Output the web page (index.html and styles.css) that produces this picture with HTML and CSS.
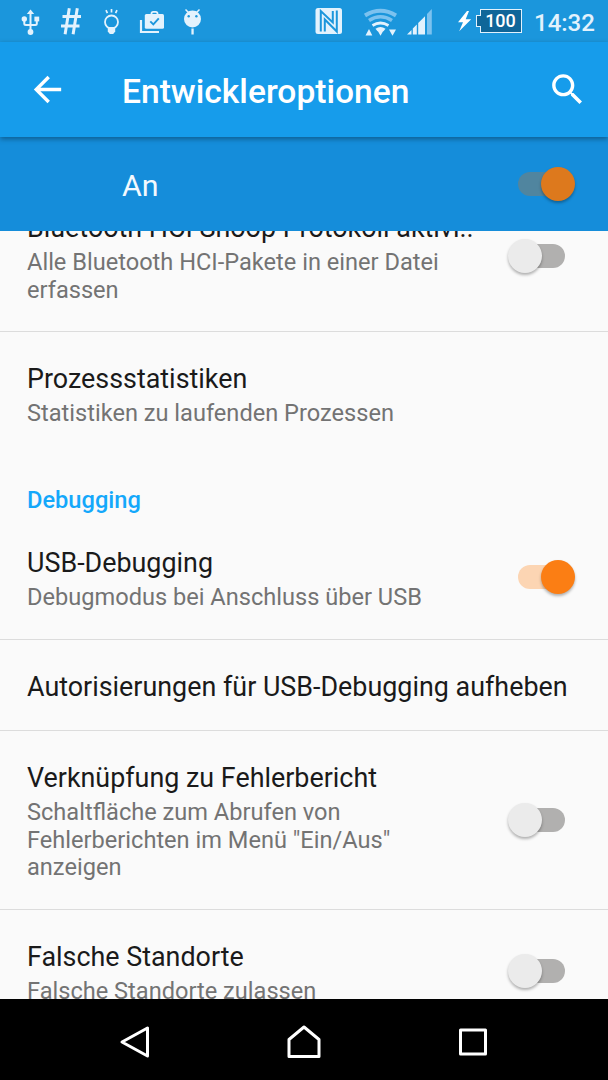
FILE: index.html
```html
<!DOCTYPE html>
<html lang="de">
<head>
    <meta charset="UTF-8">
    <meta name="viewport" content="width=device-width, initial-scale=1.0">
    <title>Entwickleroptionen</title>
    <link rel="stylesheet" href="styles.css">
</head>
<body>
    <div class="screen">
        <div class="statusbar">
            <svg class="notifications" width="220" height="42" viewBox="0 0 220 42" fill="#e3f2fd">
                <!-- USB -->
                <path d="M30.500 31V12M24.300 19v4.500q0 1.500 1.500 1.500h9.500q1.500 0 1.500-1.500V19" stroke="#e3f2fd" stroke-width="2" fill="none"/>
                <path d="M30.500 9.500l3.700 4.500h-7.400z"/>
                <circle cx="30.500" cy="32" r="2.900"/>
                <circle cx="24.300" cy="19" r="2.700"/>
                <rect x="34.400" y="16.600" width="4.800" height="4.800"/>
                <!-- Raute -->
                <path d="M69.300 8.200L65.100 34.200M77.300 8.200L73.100 34.200M62.500 16.500h18.500M61 26h18.500" stroke="#e3f2fd" stroke-width="3" fill="none"/>
                <!-- Lampe -->
                <circle cx="111.500" cy="22" r="6.500" stroke="#e3f2fd" stroke-width="1.800" fill="none"/>
                <path d="M107.800 27h7.400v4.500l-2 2.500h-3.400l-2-2.500z"/>
                <path d="M106 10.200l1.400 3M111.500 9v3.500M117 10.200l-1.400 3" stroke="#e3f2fd" stroke-width="1.700"/>
                <!-- Updates -->
                <path d="M141 20v12h18" stroke="#e3f2fd" stroke-width="2.200" fill="none"/>
                <path d="M151.500 15v-1.500q0-1.700 1.700-1.700h2.600q1.700 0 1.700 1.700V15" stroke="#e3f2fd" stroke-width="1.800" fill="none"/>
                <rect x="144.800" y="14" width="19.200" height="14.800" rx="1.500"/>
                <path d="M150.300 21.300l3 3 5.500-6" stroke="#1b96dc" stroke-width="1.900" fill="none"/>
                <!-- Android -->
                <circle cx="192.500" cy="19" r="8.500"/>
                <path d="M188.500 12.500l-3-3M196.500 12.500l3-3" stroke="#e3f2fd" stroke-width="1.500"/>
                <rect x="191.400" y="28.500" width="2.300" height="6"/>
                <circle cx="188.700" cy="16.300" r="1.200" fill="#1b96dc"/>
                <circle cx="196.400" cy="16.300" r="1.200" fill="#1b96dc"/>
            </svg>
            <svg class="signals" width="180" height="42" viewBox="300 0 180 42" fill="#e3f2fd">
                <!-- NFC -->
                <rect x="315.500" y="8" width="26.500" height="26" rx="2.500"/>
                <path d="M320.800 31.500V11L332.800 22.500V11M336.800 10.500V31.500L324.800 19.500V31.500" stroke="#1b96dc" stroke-width="2" fill="none"/>
                <!-- WLAN -->
                <g fill="none">
                    <path d="M365 15.500Q380.500 6 396 15.500" stroke="#7cc2ef" stroke-width="4"/>
                    <path d="M369 20.500Q380.500 13 392 20.500" stroke="#7cc2ef" stroke-width="3.500"/>
                    <path d="M372.500 25.500Q380.500 20.500 388.500 25.500" stroke="#e3f2fd" stroke-width="2.800"/>
                </g>
                <path d="M375.500 28.800q5-3.800 10 0l-2 2.500h-6z"/>
                <path d="M365.500 35.500l3.500-6.500 3.300 6.500zM377 29.500h7l-3.500 6.300zM389 29.500h7l-3.500 6.300z"/>
                <!-- Mobilfunk -->
                <path d="M407 34.500l4.500-4.500v4.500zM412.800 34.500v-6l4-4v10zM418.200 34.500V23l2.800-2.800v14.300zM421 34.500V20.200l4-4v18.300z"/>
                <path d="M427 34.500V14l4.800-5v25.500z" fill="#7cc2ef"/>
                <path d="M467 11L458 22.300h5l-3.800 8.900 12-12h-5.500l3.300-8.200z" fill="#fff"/>
            </svg>
            <div class="battery">100</div>
            <div class="clock">14:32</div>
        </div>

        <div class="toolbar">
            <svg class="back" width="41" height="41" viewBox="0 0 24 24" fill="#fff"><path d="M20 11H7.830l5.590-5.590L12 4l-8 8 8 8 1.410-1.410L7.830 13H20v-2z"/></svg>
            <h1>Entwickleroptionen</h1>
            <svg class="search" width="41" height="41" viewBox="0 0 24 24" fill="#fff"><path d="M15.500 14h-.79l-.28-.27C15.410 12.590 16 11.110 16 9.500 16 5.910 13.090 3 9.500 3S3 5.910 3 9.500 5.910 16 9.500 16c1.610 0 3.090-.59 4.230-1.570l.27.280v.79l5 4.990L20.490 19l-4.990-5zm-6 0C7.010 14 5 11.990 5 9.500S7.010 5 9.500 5 14 7.010 14 9.500 11.990 14 9.500 14z"/></svg>
        </div>

        <div class="master">
            <span>An</span>
            <div class="switch on"></div>
        </div>

        <div class="list">
            <div class="item scrolled">
                <div class="text">
                    <h2>Bluetooth HCI Snoop Protokoll aktivi..</h2>
                    <p>Alle Bluetooth HCI-Pakete in einer Datei erfassen</p>
                </div>
                <div class="switch"></div>
            </div>
            <div class="item last">
                <div class="text">
                    <h2>Prozessstatistiken</h2>
                    <p>Statistiken zu laufenden Prozessen</p>
                </div>
            </div>
            <div class="category">Debugging</div>
            <div class="item first">
                <div class="text">
                    <h2>USB-Debugging</h2>
                    <p>Debugmodus bei Anschluss über USB</p>
                </div>
                <div class="switch on"></div>
            </div>
            <div class="item">
                <div class="text wide">
                    <h2>Autorisierungen für USB-Debugging aufheben</h2>
                </div>
            </div>
            <div class="item">
                <div class="text">
                    <h2>Verknüpfung zu Fehlerbericht</h2>
                    <p>Schaltfläche zum Abrufen von Fehlerberichten im Menü "Ein/Aus" anzeigen</p>
                </div>
                <div class="switch"></div>
            </div>
            <div class="item">
                <div class="text">
                    <h2>Falsche Standorte</h2>
                    <p>Falsche Standorte zulassen</p>
                </div>
                <div class="switch"></div>
            </div>
        </div>

        <div class="navbar">
            <svg width="34" height="34" viewBox="0 0 34 34"><path d="M4 17L29.500 3v28z"/></svg>
            <svg width="34" height="34" viewBox="0 0 34 34"><path d="M2 14.500L17 2l15 12.500V31.500H2z"/></svg>
            <svg width="34" height="34" viewBox="0 0 34 34"><path d="M4.500 5h25v24h-25z"/></svg>
        </div>
    </div>
</body>
</html>
```

FILE: styles.css
```css
body {
    margin: 0;
    font-family: Roboto, sans-serif;
    background-color: #fafafa;
}
.screen {
    display: flex;
    flex-direction: column;
    width: 608px;
    height: 1080px;
    overflow: hidden;
}
h1, h2, p {
    margin: 0;
    font-weight: normal;
}
.statusbar {
    display: flex;
    align-items: center;
    flex: none;
    height: 42px;
    background-color: #1b96dc;
    color: #e3f2fd;
}
.signals {
    margin-left: 80px;
}
.battery {
    position: relative;
    box-sizing: border-box;
    width: 42px;
    height: 24px;
    border: 1px solid #e3f2fd;
    background-color: #0f6699;
    color: #fff;
    font-size: 18px;
    font-weight: 500;
    line-height: 22px;
    text-align: center;
    text-indent: -1px;
}
.battery::before {
    content: "";
    position: absolute;
    left: -5px;
    top: 5px;
    width: 4px;
    height: 10px;
    border: 1px solid #e3f2fd;
    border-right: none;
    background-color: #0f6699;
}
.clock {
    margin: 3px 0 0 12px;
    font-size: 24px;
    font-weight: 500;
}
.toolbar {
    position: relative;
    z-index: 2;
    display: flex;
    align-items: center;
    flex: none;
    box-sizing: border-box;
    height: 95px;
    padding: 0 20px 0 27px;
    background-color: #169ceb;
    box-shadow: 0 2px 5px rgba(0,0,0,0.35);
    color: #fff;
}
.toolbar h1 {
    flex: 1;
    margin: 3px 0 0 54px;
    font-size: 33.600px;
    font-weight: 500;
}
.master {
    display: flex;
    align-items: center;
    justify-content: space-between;
    flex: none;
    box-sizing: border-box;
    height: 94px;
    padding: 0 43px 0 122px;
    background-color: #158dda;
    color: #f3f9fe;
    font-size: 30.400px;
}
.master span {
    margin-top: 2px;
}
.list {
    flex: 1;
    overflow: hidden;
    background-color: #fafafa;
}
.item {
    display: flex;
    align-items: center;
    justify-content: space-between;
    padding: 31px 43px 27px 27px;
    border-bottom: 1px solid #dcdcdc;
}
.item.scrolled {
    margin-top: -50px;
}
.item.last {
    border-bottom: none;
}
.item.first {
    padding-top: 33px;
}
.text {
    width: 447px;
}
.text.wide {
    width: auto;
}
.item h2 {
    overflow: hidden;
    color: #1a1a1a;
    font-size: 26.880px;
    line-height: 32px;
    white-space: nowrap;
    text-overflow: ellipsis;
}
.item p {
    margin-top: 5px;
    color: #737373;
    font-size: 23.600px;
    line-height: 27.700px;
}
.category {
    padding: 31px 27px 0;
    color: #14a8fb;
    font-size: 23.640px;
    font-weight: 500;
    line-height: 28px;
}
.switch {
    position: relative;
    width: 47px;
    height: 24px;
    border-radius: 12px;
    background-color: #b1b0af;
}
.item .switch {
    margin-bottom: 4px;
}
.switch::after {
    content: "";
    position: absolute;
    left: -10px;
    top: -5px;
    width: 34px;
    height: 34px;
    border-radius: 50%;
    background-color: #ebebeb;
    box-shadow: 0 2px 3px rgba(0,0,0,0.3);
}
.switch.on {
    background-color: #fcd5b3;
}
.switch.on::after {
    left: 23px;
    background-color: #fb7e14;
}
.master .switch {
    background-color: #50859f;
}
.master .switch::after {
    background-color: #dd791d;
}
.navbar {
    display: flex;
    align-items: center;
    justify-content: center;
    gap: 135px;
    flex: none;
    height: 81px;
    padding-top: 4px;
    box-sizing: border-box;
    background-color: #000;
}
.navbar svg {
    fill: none;
    stroke: #fff;
    stroke-width: 3;
    stroke-linejoin: round;
}
```
